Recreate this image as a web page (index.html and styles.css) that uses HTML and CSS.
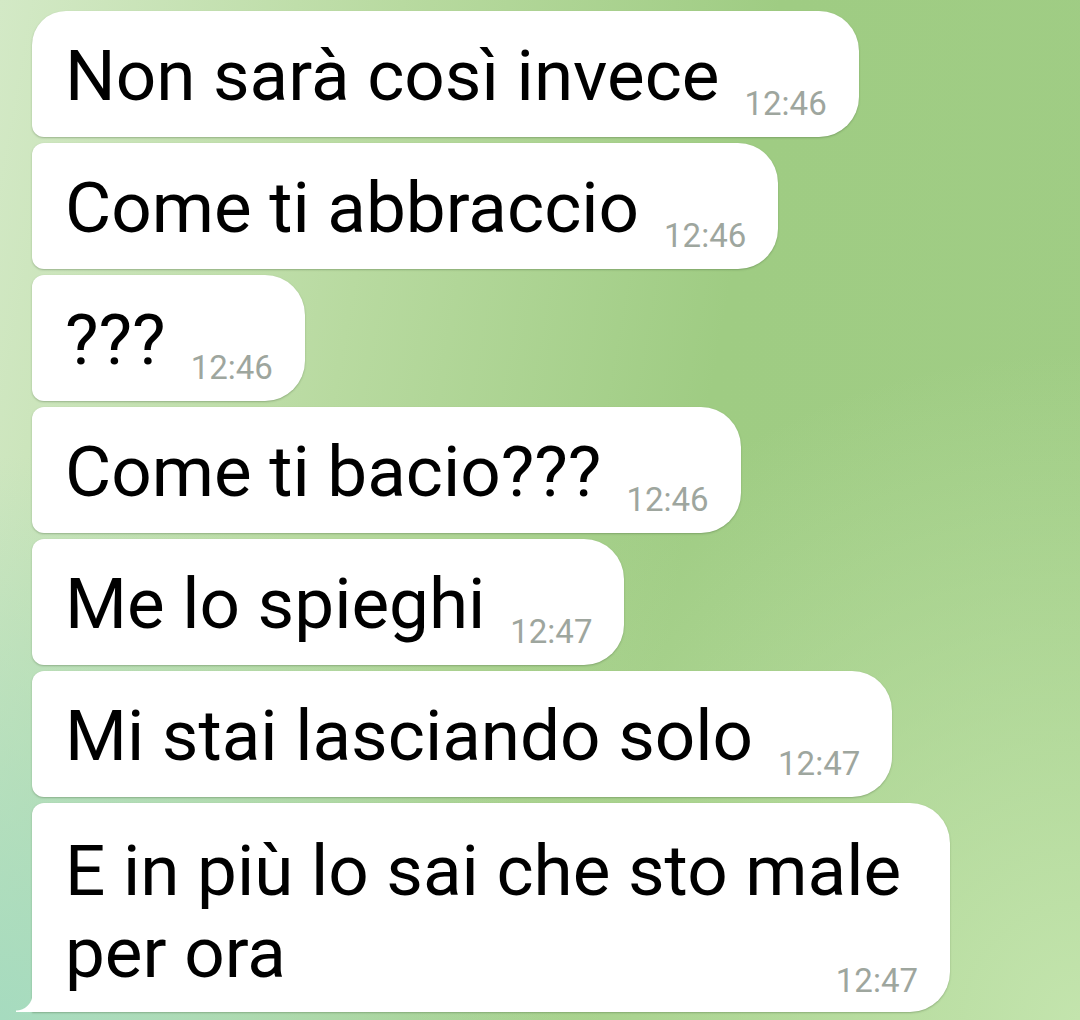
FILE: index.html
```html
<!DOCTYPE html>
<html lang="it">
<head>
    <meta charset="UTF-8">
    <meta name="viewport" content="width=device-width, initial-scale=1.0">
    <title>Chat</title>
    <link rel="stylesheet" href="styles.css">
</head>
<body>
    <div class="chat">
        <div class="bubble first">
            <span class="msgText">Non sarà così invece</span>
            <span class="msgTime">12:46</span>
        </div>
        <div class="bubble">
            <span class="msgText">Come ti abbraccio</span>
            <span class="msgTime">12:46</span>
        </div>
        <div class="bubble">
            <span class="msgText">???</span>
            <span class="msgTime">12:46</span>
        </div>
        <div class="bubble">
            <span class="msgText">Come ti bacio???</span>
            <span class="msgTime">12:46</span>
        </div>
        <div class="bubble">
            <span class="msgText">Me lo spieghi</span>
            <span class="msgTime">12:47</span>
        </div>
        <div class="bubble">
            <span class="msgText">Mi stai lasciando solo</span>
            <span class="msgTime">12:47</span>
        </div>
        <div class="bubble last">
            <span class="msgText">E in più lo sai che sto male</span><br>
            <span class="msgText">per ora</span>
            <span class="msgTime">12:47</span>
        </div>
    </div>
</body>
</html>
```
FILE: styles.css
```css
body{
    margin: 0;
    padding: 0;
    width: 1080px;
    height: 1020px;
    overflow: hidden;
    font-family: Roboto, "Noto Sans", sans-serif;
    background:
        radial-gradient(circle at 0% 100%, #a6dbbf 0, rgba(166,219,191,0) 38%),
        radial-gradient(circle at 100% 100%, #c3e4ad 0, rgba(195,228,173,0) 45%),
        linear-gradient(100deg, #d3e9c6 0%, #b8daa0 32%, #9fcc83 62%, #a0cd85 100%);
}
.chat{
    display: flex;
    flex-direction: column;
    align-items: flex-start;
    gap: 6px;
    padding: 11px 0 0 32px;
}
.bubble{
    position: relative;
    display: flex;
    align-items: flex-end;
    box-sizing: border-box;
    height: 126px;
    padding: 24px 32px 20px 33px;
    background-color: #fff;
    border-radius: 12px 40px 40px 12px;
    box-shadow: 0 1px 2px rgba(60, 90, 50, 0.35);
}
.bubble.first{
    border-top-left-radius: 34px;
}
.msgText{
    font-size: 71px;
    line-height: 82px;
    color: #000;
}
.msgTime{
    font-size: 33px;
    line-height: 32px;
    color: #9ea69e;
    margin-left: 25px;
    margin-bottom: -3px;
    white-space: nowrap;
}
.bubble.last{
    display: block;
    height: 209px;
    width: 918px;
    padding-top: 27px;
    font-size: 71px;
    line-height: 82px;
    border-bottom-left-radius: 0;
}
.bubble.last .msgTime{
    display: block;
    width: fit-content;
    margin: -29px 0 0 auto;
}
/* tail */
.bubble.last::before{
    content: "";
    position: absolute;
    left: -16px;
    bottom: 0;
    width: 17px;
    height: 18px;
    background: radial-gradient(circle at 0 0, rgba(255,255,255,0) 16px, #fff 17px);
}
```
